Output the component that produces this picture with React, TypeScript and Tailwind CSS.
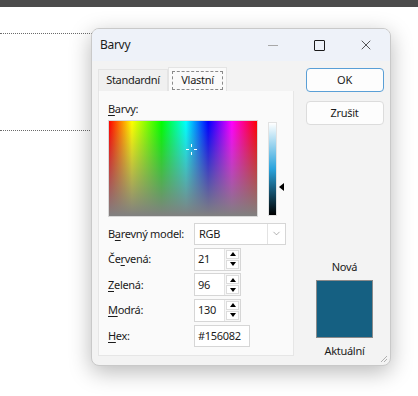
import { ChevronDown, X } from 'lucide-react'

const font = 'font-["Noto_Sans","Liberation_Sans",sans-serif] tracking-[-0.3px]'

function Key({ pre = '', k, post = '' }: { pre?: string; k: string; post?: string }) {
  return (
    <span>
      {pre}
      <span className="underline underline-offset-2">{k}</span>
      {post}
    </span>
  )
}

function Spin({ value }: { value: string }) {
  return (
    <div className="flex h-[23px] w-[47px] border border-[#d6d6d6] bg-white">
      <div className="flex flex-1 items-center pl-[3px] text-[11px] text-[#1b1b1b]">{value}</div>
      <div className="flex w-[16px] flex-col gap-px border-l border-[#e3e3e3] bg-[#f7f7f7] p-px">
        <div className="flex flex-1 items-center justify-center border border-[#dcdcdc] bg-white">
          <span className="h-0 w-0 border-x-[3.5px] border-b-[4px] border-x-transparent border-b-black" />
        </div>
        <div className="flex flex-1 items-center justify-center border border-[#dcdcdc] bg-white">
          <span className="h-0 w-0 border-x-[3.5px] border-t-[4px] border-x-transparent border-t-black" />
        </div>
      </div>
    </div>
  )
}

function Row({ label, children }: { label: React.ReactNode; children: React.ReactNode }) {
  return (
    <div className="flex h-[25.5px] items-center">
      <div className="w-[86px] whitespace-nowrap text-[11px] text-[#1b1b1b]">{label}</div>
      {children}
    </div>
  )
}

export default function App() {
  return (
    <div className={`relative h-[396px] w-[418px] overflow-hidden bg-white ${font}`}>
      <div className="h-[7px] w-full bg-[#4b4b4b]" />
      <div className="absolute left-0 top-[33px] w-[92px] border-t border-dotted border-[#6b6b6b]" />
      <div className="absolute left-0 top-[130px] w-[92px] border-t border-dotted border-[#6b6b6b]" />

      <div className="absolute left-[91px] top-[28px] flex h-[338px] w-[300px] flex-col overflow-hidden rounded-[8px] border border-[#c9c9c9] bg-[#f3f3f3] shadow-[0_6px_22px_rgba(0,0,0,0.28)]">
        {/* title bar */}
        <div className="flex h-[32px] shrink-0 items-center bg-[#eef2f9] pl-[8px]">
          <span className="flex-1 text-[12px] text-[#1b1b1b]">Barvy</span>
          <div className="flex h-full w-[47px] items-center justify-center">
            <span className="h-px w-[10px] bg-[#a8a8a8]" />
          </div>
          <div className="flex h-full w-[47px] items-center justify-center">
            <span className="h-[11px] w-[11px] rounded-[1px] border border-[#1b1b1b]" />
          </div>
          <div className="flex h-full w-[47px] items-center justify-center pr-[1px]">
            <X size={16} strokeWidth={1.1} className="text-[#1b1b1b]" />
          </div>
        </div>

        {/* body */}
        <div className="flex flex-1 pl-[6px] pr-[6px] pt-[7px]">
          <div className="flex w-[196px] flex-col">
            <div className="flex h-[23px] items-end text-[11px] text-[#1b1b1b]">
              <div className="flex h-[22px] w-[70px] items-center justify-center border border-b-0 border-[#e4e4e4] bg-[#f0f0f0]">
                Standardní
              </div>
              <div className="flex h-[24px] w-[59px] items-center justify-center border border-b-0 border-[#e4e4e4] bg-[#fafafa] px-[3px] pt-[1px]">
                <div className="flex h-[19px] w-full items-center justify-center border border-dashed border-[#8a8a8a]">
                  Vlastní
                </div>
              </div>
            </div>
            <div className="flex h-[265px] flex-col border border-t-0 border-[#e6e6e6] bg-[#fafafa] pl-[9px] pt-[9px]">
              <div className="h-[20px] text-[11px] leading-[18px] text-[#1b1b1b]">
                <Key k="B" post="arvy:" />
              </div>
              <div className="flex items-start">
                <div className="relative h-[97px] w-[150px] border border-[#d8d8d8] bg-[linear-gradient(to_bottom,rgba(128,128,128,0),#808080),linear-gradient(to_right,#ff0000,#ffff00_15.5%,#00ff00_35.5%,#00ffff_52%,#0000ff_67%,#ff00ff_83%,#ff0000)]">
                  <span className="absolute left-[82px] top-[23px] h-[3px] w-px bg-white" />
                  <span className="absolute left-[82px] top-[31px] h-[3px] w-px bg-white" />
                  <span className="absolute left-[77px] top-[28px] h-px w-[3px] bg-white" />
                  <span className="absolute left-[85px] top-[28px] h-px w-[3px] bg-white" />
                </div>
                <div className="ml-[10px] mt-[2px] h-[94px] w-[9px] border border-[#e2e2e2] bg-[linear-gradient(to_bottom,#ffffff,#2aa3dc_50%,#000000)]" />
                <div className="ml-[2px] mt-[63px] h-0 w-0 border-y-[4px] border-r-[5px] border-y-transparent border-r-black" />
              </div>

              <div className="mt-[4px] flex flex-col">
                <Row label={<Key pre="B" k="a" post="revný model:" />}>
                  <div className="flex h-[22px] w-[92px] border border-[#d6d6d6] bg-white">
                    <div className="flex flex-1 items-center pl-[4px] text-[11px] text-[#1b1b1b]">RGB</div>
                    <div className="flex w-[18px] items-center justify-center border-l border-[#e3e3e3]">
                      <ChevronDown size={11} strokeWidth={1.2} className="text-[#6f6f6f]" />
                    </div>
                  </div>
                </Row>
                <Row label={<Key pre="Če" k="r" post="vená:" />}>
                  <Spin value="21" />
                </Row>
                <Row label={<Key k="Z" post="elená:" />}>
                  <Spin value="96" />
                </Row>
                <Row label={<Key k="M" post="odrá:" />}>
                  <Spin value="130" />
                </Row>
                <Row label={<Key k="H" post="ex:" />}>
                  <div className="flex h-[22px] w-[56px] items-center border border-[#d6d6d6] bg-white pl-[3px] text-[11px] text-[#1b1b1b]">
                    #156082
                  </div>
                </Row>
              </div>
            </div>
          </div>

          <div className="ml-[11px] flex flex-1 flex-col items-center">
            <div className="flex h-[24px] w-[78px] items-center justify-center rounded-[4px] border border-[#5a9fd6] bg-[#fdfdfd] text-[11px] text-[#1b1b1b]">
              OK
            </div>
            <div className="mt-[9px] flex h-[24px] w-[78px] items-center justify-center rounded-[4px] border border-[#dcdcdc] bg-[#fdfdfd] text-[11px] text-[#1b1b1b]">
              Zrušit
            </div>
            <div className="mt-[134px] text-[11px] text-[#1b1b1b]">Nová</div>
            <div className="mt-[4px] h-[58px] w-[57px] border border-[#8a8a8a] bg-[#156082]" />
            <div className="mt-[5px] text-[11px] text-[#1b1b1b]">Aktuální</div>
          </div>
        </div>
        <svg className="absolute bottom-[2px] right-[2px]" width="9" height="9" viewBox="0 0 9 9">
          <path d="M8 2 L2 8 M8 5 L5 8" stroke="#b0b0b0" strokeWidth="1" />
        </svg>
      </div>
    </div>
  )
}
